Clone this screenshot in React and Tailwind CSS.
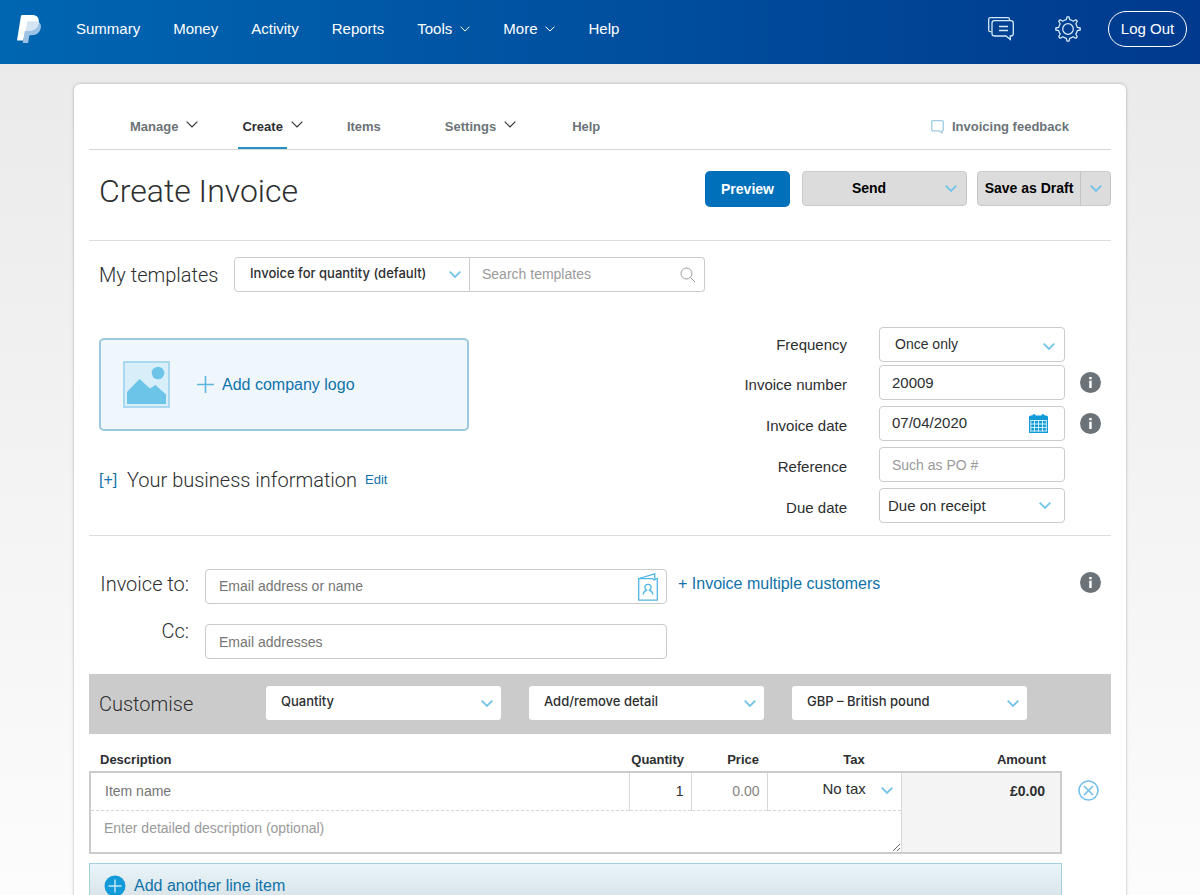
import { useState } from "react";

const tabs = [
  { name: "Manage", menu: true, className: "text-[#6c7378]" },
  { name: "Create", menu: true, active: true, className: "text-[#2c2e2f]" },
  { name: "Items", className: "text-[#6c7378] pr-4" },
  { name: "Settings", menu: true, className: "text-[#6c7378] pr-3" },
  { name: "Help", className: "text-[#6c7378]" },
];

const navLinks = [
  { name: "Summary" },
  { name: "Money" },
  { name: "Activity" },
  { name: "Reports" },
  { name: "Tools", menu: true },
  { name: "More", menu: true },
  { name: "Help" },
];

const Chevron = ({ className = "h-[7px] w-3", width = 1.8 }) => (
  <svg viewBox="0 0 12 7" fill="none" stroke="currentColor" strokeWidth={width} className={className} aria-hidden="true">
    <path d="M.7.7 6 6 11.3.7" />
  </svg>
);

const Logo = () => (
  <svg viewBox="0 0 24 28" className="h-7 w-6" role="img" aria-label="PayPal">
    <path fill="#9cc3e6" d="M9.4 6.2h8.4c4.4 0 6.8 2.4 6 6.6-.9 5-4.2 7.4-9 7.4h-1.500c-.6 0-1 .4-1.100 1L11.100 28H5.800z" />
    <path fill="#fff" d="M5.300 0h9.400c5.200 0 7.800 2.600 7 7.400-.9 5.400-4.500 8.200-9.900 8.200H9.200c-.7 0-1.200.4-1.300 1.100L6.200 25.600H0L3.900 1.200C4 .5 4.600 0 5.300 0z" />
    <path fill="#d6e5f3" d="M10 7.400c.1-.7.6-1.200 1.300-1.200h6.500c1.500 0 2.800.3 3.800.8l-.1 1.400c-1.200 4.800-4.600 7.200-9.700 7.200H9.200l-.5.1z" />
  </svg>
);

const MessageIcon = () => (
  <svg viewBox="0 0 26 24" fill="none" stroke="#d5eaf8" strokeWidth="1.3" className="h-6 w-[26px]" aria-hidden="true">
    <path d="M21.500 3.500V2.200c0-.9-.6-1.500-1.500-1.500H2.200C1.300.7.7 1.300.7 2.200v11c0 .9.6 1.500 1.500 1.500h1.300" />
    <path d="M6.500 3.700h16.300c1.400 0 2.500 1.100 2.500 2.500v10.300c0 1.400-1.100 2.500-2.500 2.500h-.5v3.500L18 19H6.500C5.100 19 4 17.900 4 16.500V6.200c0-1.400 1.100-2.500 2.500-2.500zM11 9.500h9M11 13.500h9" />
  </svg>
);

const GearIcon = () => (
  <svg viewBox="0 0 26 26" fill="none" stroke="#d5eaf8" strokeWidth="1.3" strokeLinejoin="round" className="size-[26px]" aria-hidden="true">
    <path d="M11.300 3.700 12 .8h2l.7 2.900c1.300.3 2.500.8 3.500 1.500l2.600-1.500 1.500 1.500-1.500 2.600c.7 1 1.200 2.200 1.500 3.500l2.900.7v2l-2.900.7c-.3 1.300-.8 2.500-1.500 3.500l1.500 2.600-1.500 1.500-2.600-1.500c-1 .7-2.200 1.200-3.500 1.500l-.7 2.900h-2l-.7-2.900c-1.300-.3-2.500-.8-3.500-1.500l-2.600 1.500-1.500-1.500 1.500-2.600c-.7-1-1.200-2.200-1.500-3.500L.8 14v-2l2.900-.7c.3-1.300.8-2.500 1.500-3.500L3.700 5.200l1.500-1.500 2.600 1.500c1-.7 2.200-1.200 3.500-1.500z" />
    <circle cx="13" cy="13" r="5.300" />
  </svg>
);

const PictureIcon = () => (
  <svg viewBox="0 0 47 47" className="size-[47px]" aria-hidden="true">
    <rect x="1" y="1" width="45" height="45" fill="#d8eef9" stroke="#a9d9ee" strokeWidth="2" />
    <circle cx="35" cy="12" r="6.300" fill="#6cc4e9" />
    <path fill="#6cc4e9" d="M4 31 16.500 18l10.500 9.500 5.500-3.500L43 33.500V43H4z" />
  </svg>
);

const CalendarIcon = () => (
  <svg viewBox="0 0 19 19" className="size-[19px]" aria-hidden="true">
    <path fill="#0f9bd7" d="M0 2.500 1.500 1.500h1.800L4 .3h2l.7 1.200h5.600L13 .3h2l.7 1.200h1.800L19 2.500V19H0z" />
    <path stroke="#fff" d="M1.500 6.500h16M1.500 10h16M1.500 13.500h16M1.500 17h16M1.800 6v11.500M5.500 6v11.500M9.500 6v11.500M13.500 6v11.500M17.300 6v11.500" strokeWidth=".8" />
  </svg>
);

const ContactIcon = () => (
  <svg viewBox="0 0 20 28" fill="none" stroke="#4fb6e3" strokeWidth="1.300" className="h-7 w-5" aria-hidden="true">
    <path d="M.7 5.700h14l1.500 1.500 1.500-1.500h1.600v21.400H.7zM1 5.500 16.700.8v4.500" />
    <path d="M5 21.500c.6-2.800 1.700-3.700 3.500-4.200-1-.8-1.600-1.700-1.600-3 0-1.800 1.200-3 3.100-3s3.100 1.200 3.100 3c0 1.300-.6 2.200-1.600 3 1.800.5 2.900 1.400 3.500 4.200" />
  </svg>
);

const InfoButton = ({ label }) => (
  <button type="button" aria-label={label} className="block size-[21px]">
    <svg viewBox="0 0 21 21" className="size-[21px]" aria-hidden="true">
      <circle cx="10.500" cy="10.500" r="10.500" fill="#6c7378" />
      <path fill="#fff" d="M9.200 5h2.500v2.300H9.200zM9.200 8.800h2.500V16H9.200z" />
    </svg>
  </button>
);

const Select = ({ id, label, options, className = "", text = "pb-0.5 pl-[15px]", chevron = "right-2" }) => (
  <div className={`relative ${className}`}>
    <select
      id={id}
      aria-label={label}
      className={`h-full w-full appearance-none bg-transparent text-[#2c2e2f] outline-none ${text}`}
    >
      {options.map((option) => (
        <option key={option}>{option}</option>
      ))}
    </select>
    <span className={`pointer-events-none absolute inset-y-0 flex items-center text-[#74c3e8] ${chevron}`}>
      <Chevron />
    </span>
  </div>
);

const field = "h-[35px] w-full rounded border border-[#cbcbcb] bg-white text-[#2c2e2f] outline-none";

const Header = () => (
  <header className="flex h-16 items-center bg-linear-to-r from-[#0066b2] via-[#00509f] to-[#00398d] pr-[13px] pb-1.5 pl-[17px] text-[15px] text-white">
    <a href="#">
      <Logo />
    </a>
    <nav className="ml-[35px] flex grow gap-[33px]">
      {navLinks.map((link) => (
        <a key={link.name} href="#" className="flex items-center gap-2">
          {link.name}
          {link.menu && <Chevron className="h-1.5 w-2.5" width={1.2} />}
        </a>
      ))}
    </nav>
    <button type="button" aria-label="Messages">
      <MessageIcon />
    </button>
    <button type="button" aria-label="Settings" className="mx-[27px] ml-[41px]">
      <GearIcon />
    </button>
    <button type="button" className="h-9 w-[79px] rounded-full border border-white">
      Log Out
    </button>
  </header>
);

const Tabs = () => (
  <nav className="flex items-start justify-between border-b border-[#d5d5d5] text-[13px] font-bold">
    <div className="flex gap-10 pt-[31px] pl-[37px]">
      {tabs.map((tab) => (
        <a key={tab.name} href="#" className={`flex items-start ${tab.className}`}>
          <span className={`h-[34px] border-b-2 px-1 leading-6 ${tab.active ? "border-[#2790c3]" : "border-transparent"}`}>
            {tab.name}
          </span>
          {tab.menu && <Chevron className="mt-1.5 ml-1 h-[7px] w-3 text-[#2c2e2f]" width={1.1} />}
        </a>
      ))}
    </div>
    <a href="#" className="flex items-center gap-2 pt-[31px] pr-[42px] leading-6 text-[#6c7378]">
      <svg viewBox="0 0 13 14" fill="none" stroke="#9fcbe4" strokeWidth="1.300" className="h-3.5 w-[13px]" aria-hidden="true">
        <path d="M2 .7h9c.8 0 1.300.5 1.300 1.300v7.500c0 .8-.5 1.300-1.300 1.300v2L8 10.800H2C1.200 10.800.7 10.300.7 9.500V2C.7 1.200 1.200.7 2 .7z" />
      </svg>
      Invoicing feedback
    </a>
  </nav>
);

const TitleBar = () => (
  <div className="flex items-start border-b border-[#dcdcdc] pt-[21px] pb-[29px] pl-2.5 text-[14px] font-bold text-black">
    <h1 className="grow font-[Roboto,sans-serif] text-[32px] leading-10 font-light text-[#2c2e2f]">Create Invoice</h1>
    <button type="button" className="h-9 w-[85px] rounded-[5px] bg-[#0070ba] text-white">
      Preview
    </button>
    <button type="button" className="mr-2.5 ml-3 flex h-[35px] w-[165px] items-center rounded border border-[#c9c9c9] bg-[#dcdcdc] pr-[9px] text-[#74c3e8]">
      <span className="grow pr-2.5 text-black">Send</span>
      <Chevron />
    </button>
    <div className="flex h-[35px] w-[134px] rounded border border-[#c9c9c9] bg-[#dcdcdc]">
      <button type="button" className="grow">
        Save as Draft
      </button>
      <button type="button" aria-label="More save options" className="flex w-[30px] items-center justify-center border-l border-[#c4c4c4] text-[#74c3e8]">
        <Chevron />
      </button>
    </div>
  </div>
);

const Templates = () => (
  <div className="flex items-center pt-4 pl-2.5">
    <label htmlFor="template" className="w-[135px] font-[Roboto,sans-serif] text-[20px] font-light">
      My templates
    </label>
    <Select
      id="template"
      options={["Invoice for quantity (default)"]}
      className="h-[35px] w-[236px] rounded-l border border-[#cbcbcb] font-[Inter,sans-serif] text-[13px] font-medium"
    />
    <div className="flex h-[35px] w-[235px] items-center rounded-r border border-l-0 border-[#cbcbcb] pr-2 pl-3">
      <input
        type="search"
        aria-label="Search templates"
        placeholder="Search templates"
        className="w-0 grow text-[14px] outline-none placeholder:text-[#9a9a9a]"
      />
      <svg viewBox="0 0 16 16" fill="none" stroke="#9a9a9a" className="size-4" aria-hidden="true">
        <circle cx="6.500" cy="6.500" r="5.500" />
        <path d="m10.500 10.500 4.500 4.500" />
      </svg>
    </div>
  </div>
);

const Details = () => {
  const [number, setNumber] = useState("20009");
  const [date, setDate] = useState("07/04/2020");
  const label = "mr-8 pt-[5px] text-right";

  return (
    <div className="flex justify-between border-b border-[#dcdcdc] pt-[35px] pr-2.5 pb-3 pl-2.5">
      <div className="pt-[11px]">
        <button type="button" className="flex h-[93px] w-[370px] items-center rounded-[5px] border-2 border-[#9cc8df] bg-[#eff7fd] pl-[22px] text-[16px] text-[#1072a9]">
          <PictureIcon />
          <svg viewBox="0 0 17 17" stroke="#5fb5dd" strokeWidth="1.600" className="mr-2 ml-[27px] size-[17px]" aria-hidden="true">
            <path d="M8.500 0v17M0 8.500h17" />
          </svg>
          Add company logo
        </button>
        <div className="mt-[34px] flex items-center">
          <button type="button" aria-label="Expand business information" className="w-7 text-left text-[16px] text-[#1072a9]">
            [+]
          </button>
          <h2 className="mr-2 font-[Roboto,sans-serif] text-[20px] font-light">Your business information</h2>
          <a href="#" className="text-[13px] text-[#1072a9]">
            Edit
          </a>
        </div>
      </div>

      <div className="grid grid-cols-[auto_186px_36px] items-center gap-y-1.5 text-[15px]">
        <label htmlFor="frequency" className={label}>
          Frequency
        </label>
        <Select
          id="frequency"
          options={["Once only"]}
          className="-mb-[3px] h-[35px] rounded border border-[#cbcbcb] text-[14px]"
          text="pl-[15px]"
          chevron="right-[9px] pt-1"
        />
        <span />

        <label htmlFor="number" className={label}>
          Invoice number
        </label>
        <input id="number" value={number} onChange={(e) => setNumber(e.target.value)} className={`${field} px-3`} />
        <span className="pl-[15px]">
          <InfoButton label="About the invoice number" />
        </span>

        <label htmlFor="date" className={label}>
          Invoice date
        </label>
        <div className={`${field} flex items-center pr-4 pl-3`}>
          <input id="date" value={date} onChange={(e) => setDate(e.target.value)} className="w-0 grow outline-none" />
          <button type="button" aria-label="Choose a date">
            <CalendarIcon />
          </button>
        </div>
        <span className="pl-[15px]">
          <InfoButton label="About the invoice date" />
        </span>

        <label htmlFor="reference" className={label}>
          Reference
        </label>
        <input id="reference" placeholder="Such as PO #" className={`${field} px-3 text-[14px] placeholder:text-[#9a9a9a]`} />
        <span />

        <label htmlFor="due" className={label}>
          Due date
        </label>
        <Select id="due" options={["Due on receipt"]} className="h-[35px] rounded border border-[#cbcbcb]" text="pt-0.5 pl-2" chevron="right-[13px]" />
      </div>
    </div>
  );
};

const Recipients = () => (
  <div className="flex items-start pt-[33px] pr-2.5 pb-[15px] pl-2.5 text-[14px]">
    <div className="grid grid-cols-[90px_462px] gap-x-4 gap-y-5">
      <label htmlFor="to" className="text-right font-[Roboto,sans-serif] text-[20px] leading-[30px] font-light">
        Invoice to:
      </label>
      <div className={`${field} flex items-center pr-2 pl-[13px]`}>
        <input id="to" placeholder="Email address or name" className="w-0 grow outline-none placeholder:text-[#757575]" />
        <button type="button" aria-label="Address book">
          <ContactIcon />
        </button>
      </div>
      <label htmlFor="cc" className="text-right font-[Roboto,sans-serif] text-[20px] leading-[14px] font-light">
        Cc:
      </label>
      <input id="cc" placeholder="Email addresses" className={`${field} px-[13px] placeholder:text-[#757575]`} />
    </div>
    <a href="#" className="ml-[11px] grow text-[16px] leading-[30px] text-[#1072a9]">
      + Invoice multiple customers
    </a>
    <span className="mt-[3px]">
      <InfoButton label="About recipients" />
    </span>
  </div>
);

const Customise = () => {
  const box = "h-[34px] w-[235px] rounded-[3px] bg-white font-[Inter,sans-serif] text-[13px] font-medium";
  return (
    <div className="flex h-[60px] items-center gap-7 bg-[#cbcbcb] pb-0.5 pl-2.5">
      <h2 className="w-[139px] pt-0.5 font-[Roboto,sans-serif] text-[20px] font-light">Customise</h2>
      <Select label="Customise by" options={["Quantity"]} className={box} />
      <Select label="Detail" options={["Add/remove detail"]} className={box} />
      <Select label="Currency" options={["GBP – British pound"]} className={box} />
    </div>
  );
};

const LineItems = () => {
  const [quantity, setQuantity] = useState("1");
  const cell = "border-r border-b border-[#d8d8d8] [border-bottom-style:dashed]";

  return (
    <>
      <div className="flex items-start pt-[15px]">
        <table className="grow table-fixed border-collapse text-[14px]">
          <colgroup>
            <col />
            <col className="w-[62px]" />
            <col className="w-[76px]" />
            <col className="w-[134px]" />
            <col className="w-[160px]" />
          </colgroup>
          <thead className="text-[13px] leading-[22px]">
            <tr>
              <th className="pl-2.5 text-left">Description</th>
              <th className="pr-[7px] text-right">Quantity</th>
              <th className="pr-2 text-right">Price</th>
              <th className="pl-10 text-center">Tax</th>
              <th className="pr-[15px] text-right">Amount</th>
            </tr>
          </thead>
          <tbody className="border-2 border-[#cbcbcb]">
            <tr className="h-[38px]">
              <td className={cell}>
                <input aria-label="Item name" placeholder="Item name" className="w-full pl-3.5 outline-none placeholder:text-[#757575]" />
              </td>
              <td className={cell}>
                <input
                  aria-label="Quantity"
                  value={quantity}
                  onChange={(e) => setQuantity(e.target.value)}
                  className="w-full pr-[7px] text-right outline-none"
                />
              </td>
              <td className={cell}>
                <input aria-label="Price" placeholder="0.00" className="w-full pr-[7px] text-right outline-none placeholder:text-[#858585]" />
              </td>
              <td className={cell}>
                <Select label="Tax" options={["No tax"]} className="mb-0.5 h-8 text-[15px]" text="pb-0.5 pl-[55px]" />
              </td>
              <td rowSpan="2" className="bg-[#f4f4f4] pt-2 pr-[15px] text-right align-top font-bold">
                £0.00
              </td>
            </tr>
            <tr>
              <td colSpan="4" className="border-r border-[#d8d8d8] p-0">
                <textarea
                  aria-label="Detailed description"
                  placeholder="Enter detailed description (optional)"
                  className="block h-[41px] w-full resize-y pt-[7px] pl-[13px] outline-none placeholder:text-[#9a9a9a]"
                />
              </td>
            </tr>
          </tbody>
        </table>
        <button type="button" aria-label="Remove line item" className="mt-[31px] mr-3 ml-4">
          <svg viewBox="0 0 21 21" fill="none" stroke="#74bfe9" strokeWidth="1.600" className="size-[21px]" aria-hidden="true">
            <circle cx="10.500" cy="10.500" r="9.500" />
            <path d="m6 6 9 9M15 6l-9 9" />
          </svg>
        </button>
      </div>
      <button
        type="button"
        className="mt-[9px] mr-[49px] flex h-[46px] items-center gap-2 self-stretch border border-[#a3d0df] bg-linear-to-b from-[#e9f5fa] to-[#d5dfe3] pl-3.5 text-[16px] text-[#1072a9]"
      >
        <svg viewBox="0 0 22 22" className="size-[22px]" aria-hidden="true">
          <circle cx="11" cy="11" r="10.500" fill="#129bd8" />
          <path stroke="#c5eafa" strokeWidth="1.400" d="M11 4.500v13M4.500 11h13" />
        </svg>
        Add another line item
      </button>
    </>
  );
};

export default function App() {
  return (
    <div className="h-screen overflow-hidden bg-linear-to-b from-[#e9e9e9] to-[#fcfcfc] font-['Liberation_Sans',Arial,sans-serif] text-[#2c2e2f]">
      <Header />
      <main className="mx-[74px] mt-5 flex flex-col rounded-t-md bg-white px-[15px] pb-10 shadow-[0_0_3px_rgba(0,0,0,0.3)]">
        <Tabs />
        <TitleBar />
        <Templates />
        <Details />
        <Recipients />
        <Customise />
        <LineItems />
      </main>
    </div>
  );
}
